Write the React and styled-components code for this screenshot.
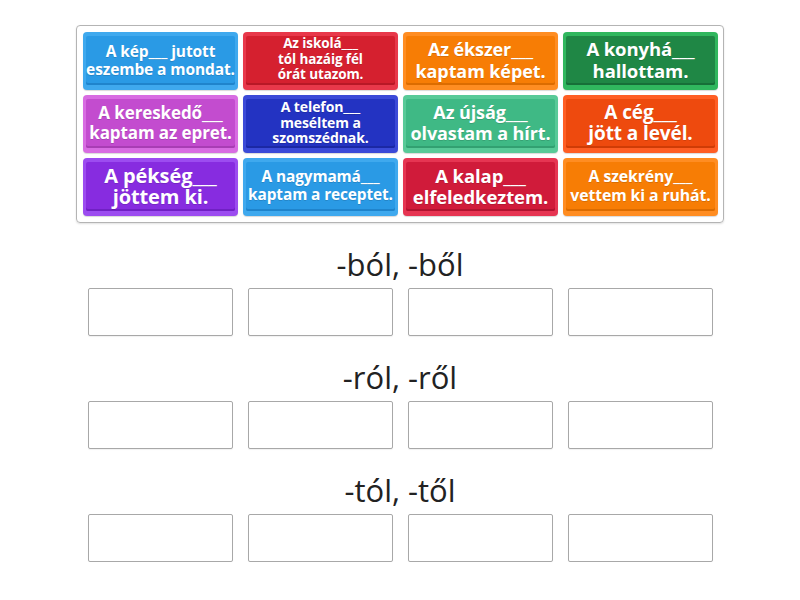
import React from "react";
import styled, { createGlobalStyle } from "styled-components";

const Global = createGlobalStyle`
  html, body { margin: 0; padding: 0; background: #ffffff; }
  body { font-family: "Open Sans", "Noto Sans", sans-serif; }
`;

const Page = styled.div`
  width: 800px;
  padding-top: 25px;
  display: flex;
  flex-direction: column;
  align-items: center;
`;

const Board = styled.div`
  width: 634px;
  padding: 6px;
  border: 1px solid #b4b4b4;
  border-radius: 4px;
  box-shadow: 0 1px 2px rgba(0, 0, 0, 0.12);
  display: grid;
  grid-template-columns: repeat(4, 155px);
  grid-auto-rows: 58px;
  gap: 5px 5px;
`;

const Tile = styled.div`
  background: ${(p) => p.$rim};
  border-radius: 4px;
  padding: 4px 3px 5px 3px;
  box-shadow: 0 1px 1px rgba(0, 0, 0, 0.15);
  display: flex;
  box-sizing: border-box;
`;

const TileFace = styled.div`
  flex: 1;
  background: ${(p) => p.$body};
  border-radius: 2px;
  box-shadow: inset 0 -2px 0 ${(p) => p.$shade};
  display: flex;
  align-items: center;
  justify-content: center;
  text-align: center;
  color: #ffffff;
  font-weight: 700;
  font-size: ${(p) => p.$size}px;
  line-height: ${(p) => p.$lh}px;
  letter-spacing: -0.1px;
  white-space: pre-line;
  padding-bottom: 2px;
  text-shadow: 0 1px 0 rgba(0, 0, 0, 0.15);
`;

const Section = styled.div`
  margin-top: 22px;
  display: flex;
  flex-direction: column;
  align-items: center;
`;

const Heading = styled.div`
  font-size: 31px;
  line-height: 38px;
  color: #222222;
  font-weight: 400;
  margin-bottom: 5px;
`;

const Slots = styled.div`
  display: flex;
  gap: 15px;
`;

const Slot = styled.div`
  width: 145px;
  height: 48px;
  box-sizing: border-box;
  border: 1px solid #a8a8a8;
  border-radius: 2px;
  background: #fff;
  box-shadow: 0 1px 1px rgba(0, 0, 0, 0.06);
`;

const C = {
  blue: { rim: "#3fa9ee", body: "#2a9ae5", shade: "#1f84cc" },
  red: { rim: "#e8384a", body: "#d5202f", shade: "#b81826" },
  orange: { rim: "#ff8d22", body: "#f77d05", shade: "#dc6c00" },
  green: { rim: "#30b75e", body: "#1f8745", shade: "#176f38" },
  pink: { rim: "#d86ce2", body: "#c34ccf", shade: "#a83db4" },
  navy: { rim: "#3b4ad8", body: "#2333c2", shade: "#1b28a4" },
  teal: { rim: "#58ca98", body: "#3fb985", shade: "#32a071" },
  flame: { rim: "#ff5e24", body: "#ee4a0e", shade: "#cf3c06" },
  violet: { rim: "#9c4cf0", body: "#872ce0", shade: "#7020c4" },
  crimson: { rim: "#e63552", body: "#d01b3a", shade: "#b1132f" },
};

const tiles = [
  { c: "blue", t: "A kép___ jutott\neszembe a mondat.", s: 15.5, lh: 18 },
  { c: "red", t: "Az iskolá___\ntól hazáig fél\nórát utazom.", s: 13.5, lh: 15.5 },
  { c: "orange", t: "Az ékszer___\nkaptam képet.", s: 18, lh: 22 },
  { c: "green", t: "A konyhá___\nhallottam.", s: 18.5, lh: 22 },
  { c: "pink", t: "A kereskedő___\nkaptam az epret.", s: 17, lh: 20 },
  { c: "navy", t: "A telefon___\nmeséltem a\nszomszédnak.", s: 14, lh: 15.5 },
  { c: "teal", t: "Az újság___\nolvastam a hírt.", s: 18, lh: 21 },
  { c: "flame", t: "A cég___\njött a levél.", s: 19, lh: 21 },
  { c: "violet", t: "A pékség___\njöttem ki.", s: 20, lh: 21 },
  { c: "blue", t: "A nagymamá___\nkaptam a receptet.", s: 15.4, lh: 18 },
  { c: "crimson", t: "A kalap___\nelfeledkeztem.", s: 18.5, lh: 21 },
  { c: "orange", t: "A szekrény___\nvettem ki a ruhát.", s: 15.8, lh: 19 },
];

const groups = ["-ból, -ből", "-ról, -ről", "-tól, -től"];

export default function App() {
  return (
    <>
      <Global />
      <Page>
        <Board>
          {tiles.map((tile, i) => {
            const col = C[tile.c];
            return (
              <Tile key={i} $rim={col.rim}>
                <TileFace
                  $body={col.body}
                  $shade={col.shade}
                  $size={tile.s}
                  $lh={tile.lh}
                >
                  {tile.t}
                </TileFace>
              </Tile>
            );
          })}
        </Board>
        {groups.map((g) => (
          <Section key={g}>
            <Heading>{g}</Heading>
            <Slots>
              <Slot />
              <Slot />
              <Slot />
              <Slot />
            </Slots>
          </Section>
        ))}
      </Page>
    </>
  );
}
